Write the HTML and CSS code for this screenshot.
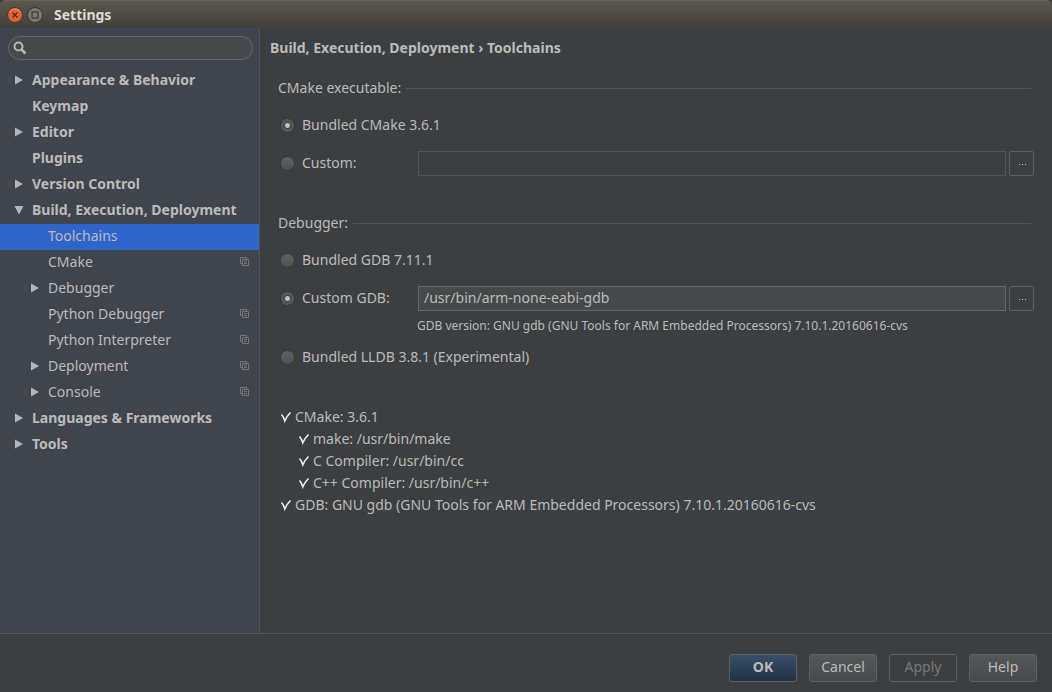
FILE: index.html
```html
<!DOCTYPE html>
<html lang="en">
<head>
<meta charset="utf-8">
<title>Settings</title>
<link rel="stylesheet" href="styles.css">
</head>
<body>
<svg class="defs" aria-hidden="true">
  <symbol id="right" viewBox="0 0 10 10"><path d="M1 0.500L9 5L1 9.500Z" fill="#b4b6b8"/></symbol>
  <symbol id="down" viewBox="0 0 10 10"><path d="M0.500 1H9.500L5 9.500Z" fill="#b4b6b8"/></symbol>
  <symbol id="copy" viewBox="0 0 10 10"><path d="M2.500 6.500H0.500V0.500H6.500V2.500M2.500 2.500H8.500V8.500H2.500ZM4 4.500H7M4 6.500H7" fill="none" stroke="#75797c"/></symbol>
  <symbol id="check" viewBox="0 0 12 12"><path d="M1.500 3.500Q3.500 5.500 4.800 9.800Q6.500 5.500 10.500 1.500" fill="none" stroke="#eeeeee" stroke-width="1.600"/></symbol>
</svg>
<div class="window">
  <header class="titlebar">
    <button class="wm" aria-label="Close"><svg width="16" height="16" viewBox="0 0 16 16"><circle cx="8" cy="8" r="7.500" fill="#ea5f34" stroke="#403a34"/><path d="M2.500 5A6.500 6.500 0 0 1 13.500 5" fill="none" stroke="#f58f69"/><path d="M5.500 5.500L10.500 10.500M10.500 5.500L5.500 10.500" stroke="#4c2a1c" stroke-width="1.100"/></svg></button>
    <button class="wm" aria-label="Maximize"><svg width="16" height="16" viewBox="0 0 16 16"><circle cx="8" cy="8" r="7.500" fill="#7b7970" stroke="#383631"/><rect x="5" y="5" width="6" height="6" fill="none" stroke="#3a3934" stroke-width="1.200"/></svg></button>
    <h1 class="title">Settings</h1>
  </header>
  <div class="body">
    <nav class="sidebar">
      <label class="search">
        <svg width="14" height="14" viewBox="0 0 14 14" aria-hidden="true"><circle cx="5.500" cy="5.500" r="4" fill="none" stroke="#b4b6b8" stroke-width="2"/><path d="M8.500 8.500L12.500 12.500" stroke="#b4b6b8" stroke-width="2.500"/></svg>
        <input type="text" aria-label="Search settings">
      </label>
      <ul class="tree">
        <li class="item group"><svg class="arrow"><use href="#right"/></svg><a href="#">Appearance &amp; Behavior</a></li>
        <li class="item group"><span class="arrow"></span><a href="#">Keymap</a></li>
        <li class="item group"><svg class="arrow"><use href="#right"/></svg><a href="#">Editor</a></li>
        <li class="item group"><span class="arrow"></span><a href="#">Plugins</a></li>
        <li class="item group"><svg class="arrow"><use href="#right"/></svg><a href="#">Version Control</a></li>
        <li class="item group"><svg class="arrow"><use href="#down"/></svg><a href="#">Build, Execution, Deployment</a></li>
        <li class="item child selected"><span class="arrow"></span><a href="#">Toolchains</a></li>
        <li class="item child"><span class="arrow"></span><a href="#">CMake</a><svg class="copy"><use href="#copy"/></svg></li>
        <li class="item child"><svg class="arrow"><use href="#right"/></svg><a href="#">Debugger</a></li>
        <li class="item child"><span class="arrow"></span><a href="#">Python Debugger</a><svg class="copy"><use href="#copy"/></svg></li>
        <li class="item child"><span class="arrow"></span><a href="#">Python Interpreter</a><svg class="copy"><use href="#copy"/></svg></li>
        <li class="item child"><svg class="arrow"><use href="#right"/></svg><a href="#">Deployment</a><svg class="copy"><use href="#copy"/></svg></li>
        <li class="item child"><svg class="arrow"><use href="#right"/></svg><a href="#">Console</a><svg class="copy"><use href="#copy"/></svg></li>
        <li class="item group"><svg class="arrow"><use href="#right"/></svg><a href="#">Languages &amp; Frameworks</a></li>
        <li class="item group"><svg class="arrow"><use href="#right"/></svg><a href="#">Tools</a></li>
      </ul>
    </nav>
    <main class="content">
      <h2 class="crumbs">Build, Execution, Deployment › Toolchains</h2>
      <section class="section" role="radiogroup" aria-labelledby="cmake-title">
        <h3 class="legend" id="cmake-title">CMake executable:</h3>
        <div class="row"><label class="option wide"><input type="radio" name="cmake" checked>Bundled CMake 3.6.1</label></div>
        <div class="row"><label class="option"><input type="radio" name="cmake">Custom:</label><input class="path empty" type="text" aria-label="Custom CMake path"><button class="browse" aria-label="Browse for CMake"><span class="dots"></span></button></div>
      </section>
      <section class="section" role="radiogroup" aria-labelledby="debugger-title">
        <h3 class="legend" id="debugger-title">Debugger:</h3>
        <div class="row"><label class="option wide"><input type="radio" name="gdb">Bundled GDB 7.11.1</label></div>
        <div class="row"><label class="option"><input type="radio" name="gdb" checked>Custom GDB:</label><input class="path" type="text" aria-label="Custom GDB path" value="/usr/bin/arm-none-eabi-gdb"><button class="browse" aria-label="Browse for GDB"><span class="dots"></span></button></div>
        <p class="note">GDB version: GNU gdb (GNU Tools for ARM Embedded Processors) 7.10.1.20160616-cvs</p>
        <div class="row after-note"><label class="option wide"><input type="radio" name="gdb">Bundled LLDB 3.8.1 (Experimental)</label></div>
      </section>
      <ul class="status">
        <li><svg class="check"><use href="#check"/></svg>CMake: 3.6.1</li>
        <li class="nested"><svg class="check"><use href="#check"/></svg>make: /usr/bin/make</li>
        <li class="nested"><svg class="check"><use href="#check"/></svg>C Compiler: /usr/bin/cc</li>
        <li class="nested"><svg class="check"><use href="#check"/></svg>C++ Compiler: /usr/bin/c++</li>
        <li><svg class="check"><use href="#check"/></svg>GDB: GNU gdb (GNU Tools for ARM Embedded Processors) 7.10.1.20160616-cvs</li>
      </ul>
    </main>
  </div>
  <footer class="footer">
    <button class="btn primary">OK</button>
    <button class="btn">Cancel</button>
    <button class="btn" disabled>Apply</button>
    <button class="btn">Help</button>
  </footer>
</div>
</body>
</html>
```

FILE: styles.css
```css
* { box-sizing: border-box; }
body {
  margin: 0;
  background: #3c3f41;
  color: #bbbbbb;
  font: 14px/20px "Noto Sans", "Open Sans", sans-serif;
}
h1, h2, h3, p, ul { margin: 0; padding: 0; font-size: 14px; }
ul { list-style: none; }
button, input { font: inherit; color: inherit; }
.defs { display: none; }
.window { display: flex; flex-direction: column; min-height: 100vh; }

.titlebar {
  display: flex;
  align-items: center;
  gap: 4px;
  height: 28px;
  padding: 0 7px;
  background: linear-gradient(#5b584f, #403f3a);
  border-top: 1px solid #67645a;
  border-radius: 6px 6px 0 0;
}
.wm { display: flex; padding: 0; border: 0; background: none; }
.title { margin-left: 7px; color: #dfdbd2; font-weight: 700; }

.body { display: flex; flex: 1; }
.sidebar {
  width: 260px;
  flex: none;
  padding-top: 8px;
  background: #40444d;
  border-right: 1px solid #515456;
}
.search {
  display: flex;
  align-items: center;
  height: 24px;
  margin: 0 6px 8px 8px;
  padding: 0 4px;
  background: #45494a;
  border: 1px solid #646667;
  border-radius: 12px;
}
.search input {
  flex: 1;
  min-width: 0;
  padding: 0 6px;
  border: 0;
  outline: 0;
  background: none;
}
.item { display: flex; align-items: center; height: 26px; padding: 0 9px 2px 14px; }
.item a { flex: 1; color: inherit; text-decoration: none; white-space: nowrap; }
.group { font-weight: 700; }
.child { padding-left: 30px; }
.selected { background: #2f65ca; }
.arrow { width: 10px; height: 10px; margin-right: 8px; flex: none; }
.copy { width: 10px; height: 10px; flex: none; }

.content { flex: 1; min-width: 0; padding: 10px 18px 20px 10px; }
.crumbs { font-weight: 700; margin-bottom: 20px; }
.section { padding-left: 8px; margin-bottom: 37px; }
.legend {
  display: flex;
  align-items: center;
  gap: 5px;
  margin: 0 3px 17px 0;
  font-weight: 400;
}
.legend::after { content: ""; flex: 1; height: 1px; background: #515456; }
.row { display: flex; align-items: center; margin-top: 16px; }
.option { display: flex; align-items: center; width: 140px; padding: 0 0 1px 2px; }
.option.wide { width: auto; padding-bottom: 0; }
.option input {
  appearance: none;
  width: 15px;
  height: 15px;
  margin: 0 7px 0 0;
  border: 1px solid #34373a;
  border-radius: 50%;
  background: linear-gradient(#5d6163, #4d5153);
}
.option input:checked {
  background: radial-gradient(circle, #c0c0c0 0 2px, #45494b 3px, #565a5c 5px);
}
.path {
  flex: 1;
  min-width: 0;
  height: 25px;
  padding: 0 5px 2px;
  border: 1px solid #646667;
  border-radius: 0;
  outline: 0;
  background: #45494a;
}
.path.empty { background: transparent; border-color: #515456; }
.browse {
  display: grid;
  place-items: center;
  width: 25px;
  height: 25px;
  margin-left: 3px;
  padding: 2px 0 0 2px;
  border: 1px solid #5e6163;
  border-radius: 2px;
  background: transparent;
}
.dots {
  width: 7px;
  height: 1px;
  background: repeating-linear-gradient(90deg, #bbbbbb 0 1px, transparent 1px 3px);
}
.note { margin: 5px 0 0 139px; font-size: 12px; }
.row.after-note { margin-top: 11px; }

.status { padding: 2px 0 0 10px; }
.status li { display: flex; align-items: center; gap: 3px; height: 22px; }
.status .nested { padding-left: 18px; }
.check { width: 12px; height: 12px; flex: none; }

.footer {
  display: flex;
  justify-content: flex-end;
  gap: 12px;
  padding: 20px 15px 10px;
  border-top: 1px solid #515456;
}
.btn {
  width: 68px;
  height: 28px;
  padding: 0 0 2px;
  border: 1px solid #5e6163;
  border-radius: 3px;
  background: linear-gradient(#53585a, #45494b);
}
.btn.primary { background: linear-gradient(#384f6b, #233143); font-weight: 700; }
.btn:disabled { background: transparent; color: #777777; }
```
